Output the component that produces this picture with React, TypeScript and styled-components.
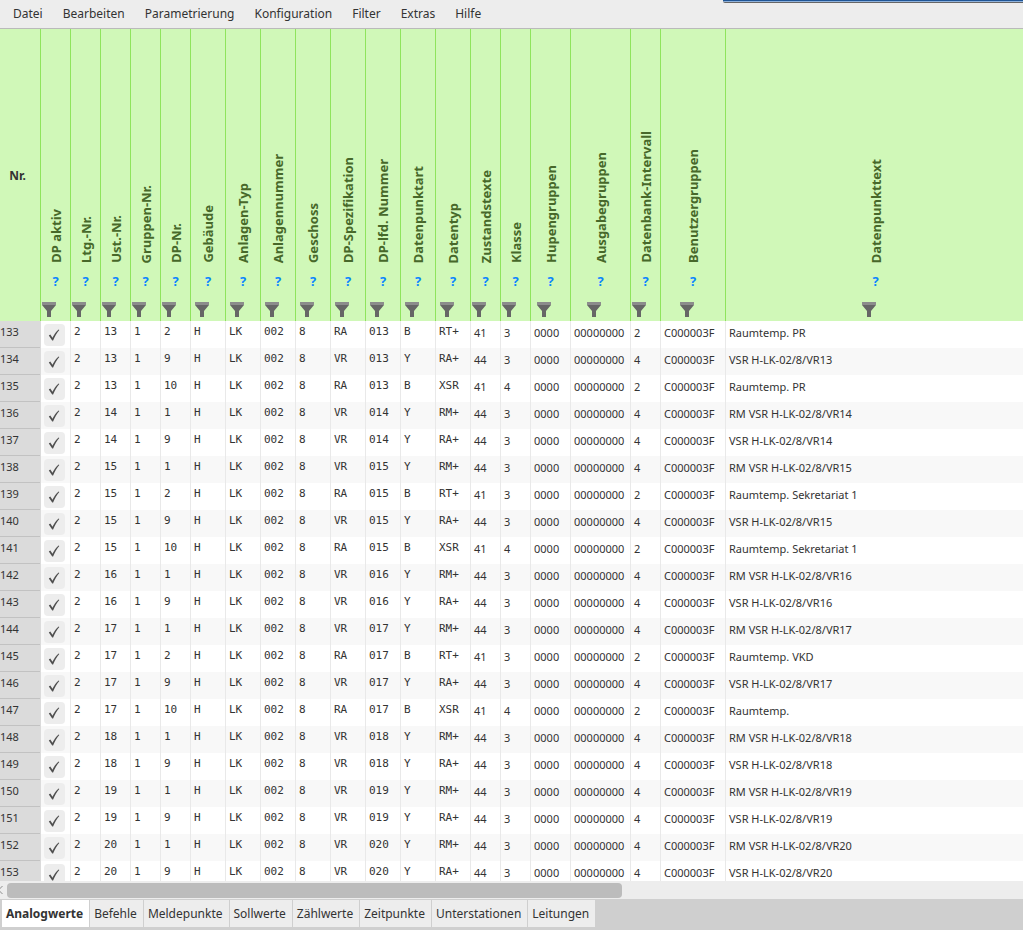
import React, { useState } from "react";
import styled, { createGlobalStyle } from "styled-components";

const SANS = '"Noto Sans", "Open Sans", sans-serif';
const MONO = '"DejaVu Sans Mono", "Liberation Mono", monospace';

const GlobalStyle = createGlobalStyle`
  * { box-sizing: border-box; }
  body { margin: 0; font-family: ${SANS}; font-size: 12px; color: #333; background: #ededed; }
  button, input { font: inherit; color: inherit; margin: 0; }
`;

const Page = styled.div`
  position: relative;
  display: flex;
  flex-direction: column;
  height: 100vh;
  overflow: hidden;
`;

const WindowEdge = styled.div`
  position: absolute;
  top: 0;
  right: 0;
  width: calc(100% - 723px);
  height: 3px;
  border-bottom: 1px solid #666;
  border-bottom-left-radius: 2px;
  background: linear-gradient(#1f5596 0 1px, #8fb2dc 1px 2px);
`;

const MenuBar = styled.nav`
  display: flex;
  flex: none;
  height: 29px;
  padding: 0 3px;
  background: #ededed;
  border-bottom: 1px solid #bababa;
`;

const MenuButton = styled.button`
  padding: 0 10px 2px;
  border: 0;
  background: none;
  white-space: nowrap;
`;

const GridArea = styled.main`
  flex: 1;
  min-height: 0;
  overflow: hidden;
  background: #fff;
`;

const Table = styled.table`
  table-layout: fixed;
  width: 100%;
  min-width: 1025px;
  border-collapse: separate;
  border-spacing: 0;
`;

const NumberHead = styled.th`
  height: 292px;
  padding: 0 5px 0 0;
  background: #d0f8b8;
  font-size: 12px;
`;

const HeadCell = styled.th`
  height: 292px;
  padding: 0;
  background: #d0f8b8;
  border-left: 1px solid #8fe45c;
  vertical-align: bottom;
`;

const HeadStack = styled.div`
  display: flex;
  flex-direction: column;
  align-items: center;
  height: 292px;
  justify-content: flex-end;
  padding-bottom: 4px;
`;

const HeadLabel = styled.span`
  writing-mode: vertical-rl;
  transform: rotate(180deg);
  font-size: 13px;
  line-height: 16px;
  font-weight: 700;
  color: #47682a;
  white-space: nowrap;
`;

const HelpButton = styled.button`
  height: 18px;
  margin: 9px 0 12px;
  padding: 0;
  border: 0;
  background: none;
  color: #0a84ff;
  font-size: 13px;
  font-weight: 700;
  line-height: 18px;
`;

const FilterButton = styled.button`
  display: block;
  height: 15px;
  margin-right: 13px;
  padding: 0;
  border: 0;
  background: none;

  svg { display: block; }
`;

const Row = styled.tr`
  background: #fff;
  &:nth-child(even) { background: #f8f8f8; }
`;

const RowNumber = styled.th`
  height: 27px;
  padding: 3px 0 0;
  background: #dbdbdb;
  border-bottom: 1px solid #c2c2c2;
  font-size: 11px;
  font-weight: 400;
  line-height: 16px;
  text-align: left;
  vertical-align: top;
`;

const Cell = styled.td<{ $mono?: boolean }>`
  height: 27px;
  padding: ${(p) => (p.$mono ? "3px 0 0 3px" : "4px 0 0 3px")};
  border-left: 1px solid #e9e9e9;
  font-family: ${(p) => (p.$mono ? MONO : SANS)};
  font-size: 11px;
  line-height: 16px;
  vertical-align: top;
  white-space: nowrap;
`;

const CheckCell = styled.td`
  height: 27px;
  padding: 3px 0 0 3px;
  border-left: 1px solid #dbdbdb;
  vertical-align: top;
`;

const CheckLabel = styled.label`
  display: grid;
  width: 21px;
  height: 22px;
  border-radius: 4px;
  background: #ededed;

  > * { grid-area: 1 / 1; place-self: center; }
  input { appearance: none; width: 100%; height: 100%; }
  svg { visibility: hidden; pointer-events: none; }
  input:checked + svg { visibility: visible; }
`;

const ScrollTrack = styled.div`
  display: grid;
  flex: none;
  grid-template-columns: 7px 615fr 401fr;
  align-items: center;
  height: 18px;
  background: #ededed;
`;

const ScrollThumb = styled.div`
  height: 15px;
  border-radius: 4px;
  background: #bcbcbc;
`;

const TabBar = styled.div`
  display: flex;
  flex: none;
  gap: 1px;
  height: 31px;
  padding: 1px 2px 3px;
  background: #cfcfcf;
`;

const Tab = styled.button<{ $active: boolean }>`
  padding: 0 6px 0 4px;
  border: 0;
  background: ${(p) => (p.$active ? "#fff" : "#ededed")};
  font-weight: ${(p) => (p.$active ? 700 : 400)};
  white-space: nowrap;
`;

const FunnelIcon = () => (
  <svg width="14" height="15" viewBox="0 0 14 15" aria-hidden="true">
    <path d="M0 3h14L9 9V15H5V9Z" fill="#666" />
    <path d="M0 0h14v3H0z" fill="#8c8c8c" />
  </svg>
);

const CheckIcon = () => (
  <svg width="13" height="12" viewBox="0 0 13 12" aria-hidden="true">
    <path d="M0.800 6.500 2.300 5.600 4.500 8.800C6 5.500 8 2.500 10.600 0.500L11.300 1.100C8.800 4 6.900 7.500 5.100 11.500H4.200Z" fill="#4f4f4f" />
  </svg>
);

const ArrowIcon = () => (
  <svg width="4" height="10" viewBox="0 0 4 10" aria-hidden="true">
    <path d="M2.500 1-1.500 5 2.500 9" fill="none" stroke="#8c8c8c" />
  </svg>
);

const menus = ["Datei", "Bearbeiten", "Parametrierung", "Konfiguration", "Filter", "Extras", "Hilfe"];

const tabs = ["Analogwerte", "Befehle", "Meldepunkte", "Sollwerte", "Zählwerte", "Zeitpunkte", "Unterstationen", "Leitungen"];

const columns: { label: string; width?: number }[] = [
  { label: "DP aktiv", width: 30 },
  { label: "Ltg.-Nr.", width: 30 },
  { label: "Ust.-Nr.", width: 30 },
  { label: "Gruppen-Nr.", width: 30 },
  { label: "DP-Nr.", width: 30 },
  { label: "Gebäude", width: 35 },
  { label: "Anlagen-Typ", width: 35 },
  { label: "Anlagennummer", width: 35 },
  { label: "Geschoss", width: 35 },
  { label: "DP-Spezifikation", width: 35 },
  { label: "DP-lfd. Nummer", width: 35 },
  { label: "Datenpunktart", width: 35 },
  { label: "Datentyp", width: 35 },
  { label: "Zustandstexte", width: 30 },
  { label: "Klasse", width: 30 },
  { label: "Hupengruppen", width: 40 },
  { label: "Ausgabegruppen", width: 60 },
  { label: "Datenbank-Intervall", width: 30 },
  { label: "Benutzergruppen", width: 65 },
  { label: "Datenpunkttext" },
];

type Kind = "RT+" | "RA+" | "XSR" | "RM+";

const kinds: Record<Kind, { dp: string; spec: string; art: string; state: string; cls: string; interval: string }> = {
  "RT+": { dp: "2", spec: "RA", art: "B", state: "41", cls: "3", interval: "2" },
  "RA+": { dp: "9", spec: "VR", art: "Y", state: "44", cls: "3", interval: "4" },
  XSR: { dp: "10", spec: "RA", art: "B", state: "41", cls: "4", interval: "2" },
  "RM+": { dp: "1", spec: "VR", art: "Y", state: "44", cls: "3", interval: "4" },
};

const points: [number, Kind, string][] = [
  [13, "RT+", "Raumtemp. PR"],
  [13, "RA+", "VSR H-LK-02/8/VR13"],
  [13, "XSR", "Raumtemp. PR"],
  [14, "RM+", "RM VSR H-LK-02/8/VR14"],
  [14, "RA+", "VSR H-LK-02/8/VR14"],
  [15, "RM+", "RM VSR H-LK-02/8/VR15"],
  [15, "RT+", "Raumtemp. Sekretariat 1"],
  [15, "RA+", "VSR H-LK-02/8/VR15"],
  [15, "XSR", "Raumtemp. Sekretariat 1"],
  [16, "RM+", "RM VSR H-LK-02/8/VR16"],
  [16, "RA+", "VSR H-LK-02/8/VR16"],
  [17, "RM+", "RM VSR H-LK-02/8/VR17"],
  [17, "RT+", "Raumtemp. VKD"],
  [17, "RA+", "VSR H-LK-02/8/VR17"],
  [17, "XSR", "Raumtemp."],
  [18, "RM+", "RM VSR H-LK-02/8/VR18"],
  [18, "RA+", "VSR H-LK-02/8/VR18"],
  [19, "RM+", "RM VSR H-LK-02/8/VR19"],
  [19, "RA+", "VSR H-LK-02/8/VR19"],
  [20, "RM+", "RM VSR H-LK-02/8/VR20"],
  [20, "RA+", "VSR H-LK-02/8/VR20"],
];

export default function App() {
  const [active, setActive] = useState("Analogwerte");

  return (
    <Page>
      <GlobalStyle />
      <MenuBar>
        {menus.map((m) => (
          <MenuButton key={m}>{m}</MenuButton>
        ))}
      </MenuBar>
      <WindowEdge />
      <GridArea>
        <Table>
          <colgroup>
            <col width={40} />
            {columns.map((c) => (
              <col key={c.label} width={c.width} />
            ))}
          </colgroup>
          <thead>
            <tr>
              <NumberHead scope="col">Nr.</NumberHead>
              {columns.map((c) => (
                <HeadCell key={c.label} scope="col">
                  <HeadStack>
                    <HeadLabel>{c.label}</HeadLabel>
                    <HelpButton aria-label={`Hilfe: ${c.label}`}>?</HelpButton>
                    <FilterButton aria-label={`Filter: ${c.label}`}>
                      <FunnelIcon />
                    </FilterButton>
                  </HeadStack>
                </HeadCell>
              ))}
            </tr>
          </thead>
          <tbody>
            {points.map(([unit, kind, text], i) => {
              const k = kinds[kind];
              const codes = ["2", String(unit), "1", k.dp, "H", "LK", "002", "8", k.spec, `0${unit}`, k.art, kind];
              const values = [k.state, k.cls, "0000", "00000000", k.interval, "C000003F", text];
              return (
                <Row key={i}>
                  <RowNumber scope="row">{133 + i}</RowNumber>
                  <CheckCell>
                    <CheckLabel>
                      <input type="checkbox" defaultChecked aria-label={`DP aktiv ${133 + i}`} />
                      <CheckIcon />
                    </CheckLabel>
                  </CheckCell>
                  {codes.map((v, n) => (
                    <Cell key={n} $mono>{v}</Cell>
                  ))}
                  {values.map((v, n) => (
                    <Cell key={n}>{v}</Cell>
                  ))}
                </Row>
              );
            })}
          </tbody>
        </Table>
      </GridArea>
      <ScrollTrack>
        <ArrowIcon />
        <ScrollThumb />
      </ScrollTrack>
      <TabBar role="tablist">
        {tabs.map((t) => (
          <Tab key={t} role="tab" aria-selected={t === active} $active={t === active} onClick={() => setActive(t)}>
            {t}
          </Tab>
        ))}
      </TabBar>
    </Page>
  );
}
